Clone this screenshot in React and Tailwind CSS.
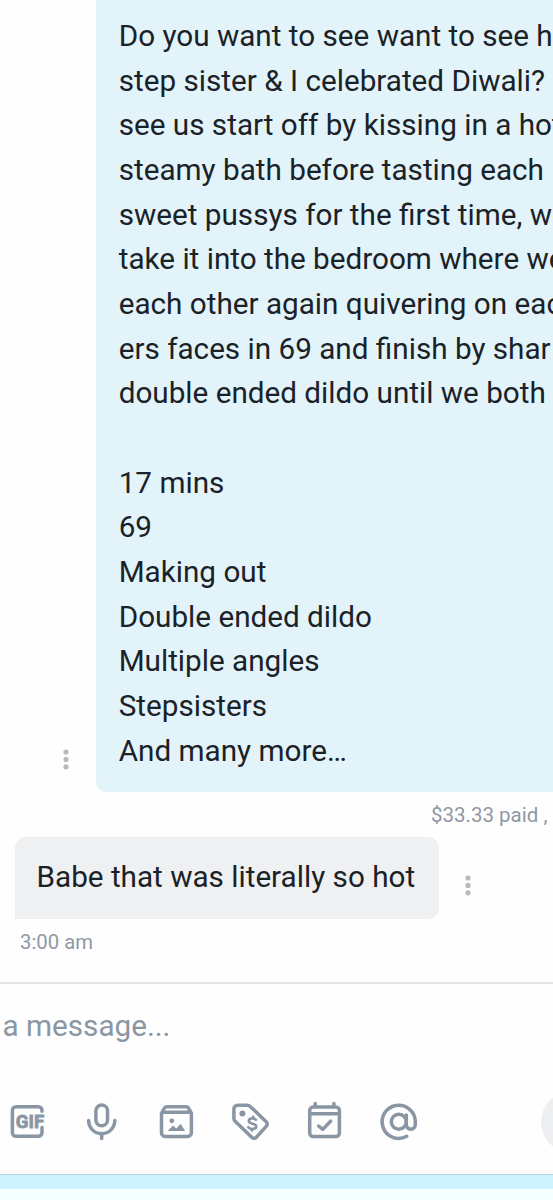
import { clsx } from 'clsx';

const messageLines = [
    'Do you want to see want to see h',
    'step sister & I celebrated Diwali?',
    'see us start off by kissing in a hot',
    'steamy bath before tasting each',
    'sweet pussys for the first time, w',
    'take it into the bedroom where we',
    'each other again quivering on eac',
    'ers faces in 69 and finish by shar',
    'double ended dildo until we both',
    '',
    '17 mins',
    '69',
    'Making out',
    'Double ended dildo',
    'Multiple angles',
    'Stepsisters',
    'And many more…',
];

function MoreButton({ className }) {
    return (
        <button type="button" aria-label="More" className={clsx('shrink-0', className)}>
            <svg width="6" height="21" viewBox="0 0 6 21" fill="#b6bac0">
                <circle cx="3" cy="3" r="2.6" />
                <circle cx="3" cy="10.4" r="2.6" />
                <circle cx="3" cy="17.8" r="2.6" />
            </svg>
        </button>
    );
}

function ToolIcon({ label, children }) {
    return (
        <button type="button" aria-label={label} className="shrink-0">
            <svg
                width="44"
                height="44"
                viewBox="0 0 44 44"
                fill="none"
                stroke="#8a96a3"
                strokeWidth="3.5"
                strokeLinecap="round"
                strokeLinejoin="round"
            >
                {children}
            </svg>
        </button>
    );
}

export default function App() {
    return (
        <div className="flex h-[1200px] w-[553px] flex-col overflow-hidden bg-[#fefefe] font-['Roboto',sans-serif] text-[29.68px] leading-[44.67px] text-[#1b2227]">
            <div className="flex h-[792px] shrink-0 items-end">
                <MoreButton className="mb-[22.500px] ml-[63.400px] mr-[27px]" />
                <div className="h-full w-[560px] shrink-0 rounded-bl-[10px] bg-[#e2f3fa] pl-[22.300px] pt-[14px]">
                    {messageLines.map((line, i) => (
                        <p key={i} className="h-[44.67px] whitespace-nowrap">{line}</p>
                    ))}
                </div>
            </div>

            <div className="flex h-[45px] shrink-0 pl-[431px] pt-[1px] text-[20.5px] text-[#8f98a3]">
                <span className="whitespace-nowrap">$33.33 paid ,</span>
            </div>

            <div className="flex h-[82px] shrink-0 items-end pl-[14.500px]">
                <div className="h-full w-[424px] rounded-[11px] rounded-bl-none bg-[#eff0f2] pl-[22px] pt-[18px]">
                    <p className="whitespace-nowrap">Babe that was literally so hot</p>
                </div>
                <MoreButton className="mb-[23px] ml-[26.500px]" />
            </div>
            <div className="h-[63px] shrink-0 pl-[20px] pt-[1px] text-[20.3px] text-[#8f98a3]">3:00 am</div>

            <div className="flex h-[192px] shrink-0 flex-col border-t-2 border-[#e2e4e5]">
                <p className="h-[116px] pl-[2.500px] pt-[20px] text-[#8a96a3]">a message...</p>
                <div className="flex items-start">
                    <div className="flex w-[541px] shrink-0 gap-[30.3px] pl-[6px]">
                        <ToolIcon label="GIF">
                            <path d="M36 11.300v-.9a3.700 3.700 0 0 0-3.700-3.700H10.100a3.700 3.700 0 0 0-3.700 3.700v22.200a3.700 3.700 0 0 0 3.700 3.700H32.300a3.700 3.700 0 0 0 3.700-3.700v-5.200" />
                            <text
                                x="9.800"
                                y="28.200"
                                textLength="28.400"
                                lengthAdjust="spacingAndGlyphs"
                                className="font-['Roboto',sans-serif] text-[19px] font-bold"
                                fill="#8a96a3"
                                stroke="#8a96a3"
                                strokeWidth="0.8"
                            >
                                GIF
                            </text>
                        </ToolIcon>
                        <ToolIcon label="Voice">
                            <rect x="15.900" y="5" width="11.600" height="20.800" rx="5.800" />
                            <path d="M8.600 20.600a13.100 13.100 0 0 0 26.200 0M21.700 33.600v5" />
                        </ToolIcon>
                        <ToolIcon label="Vault">
                            <path d="M6.500 13.200l2.400-4.500c.6-1.200 1.400-1.900 2.700-1.900h19.700c1.300 0 2.100.7 2.700 1.900l2.400 4.500v19.500a3.700 3.700 0 0 1-3.700 3.700H10.200a3.700 3.700 0 0 1-3.700-3.700zM7.500 12.200h27.900" />
                            <circle cx="16.800" cy="20.800" r="2.400" fill="#8a96a3" stroke="none" />
                            <path d="M12.800 31l5.100-5.400 3.400 3 4.300-4.900 4.500 7.300z" fill="#8a96a3" stroke="none" />
                        </ToolIcon>
                        <ToolIcon label="Price">
                            <path d="M4.900 8.900a3.700 3.700 0 0 1 3.700-3.700h9.600c1.200 0 2.200.4 3 1.200l16 15.300a3.200 3.200 0 0 1 0 4.700L27.500 37.200a3.400 3.400 0 0 1-4.800 0L6.100 21.300a3.700 3.700 0 0 1-1.200-2.700z" />
                            <circle cx="13.400" cy="13.600" r="3" fill="#8a96a3" stroke="none" />
                            <path d="M26.900 19.800c-.8-1-2-1.400-3.400-1.400-2.200 0-3.700.9-3.700 2.600 0 3.600 7.500 1.700 7.500 5.300 0 1.800-1.600 2.700-3.900 2.700-1.700 0-3.200-.6-4.100-1.800M24.200 16.800v1.500M22.900 29.100v1.500" strokeWidth="2.600" />
                        </ToolIcon>
                        <ToolIcon label="Schedule">
                            <rect x="6.700" y="6.900" width="29.700" height="29.500" rx="3.400" />
                            <path d="M6.700 13.700h29.700M12.200 3.600v3M30.900 3.600v3M15.600 26l4.200 3.400 7.800-8.200" />
                        </ToolIcon>
                        <ToolIcon label="Mention">
                            <circle cx="21.800" cy="21.700" r="7.500" />
                            <path d="M29.300 15v9.600a4.500 4.500 0 0 0 9 .2V21.700A16.600 16.600 0 1 0 29.800 36.300" />
                        </ToolIcon>
                    </div>
                    <button type="button" aria-label="Send" className="-mt-[9px] size-[62px] shrink-0 rounded-full bg-[#edeef0]" />
                </div>
            </div>

            <div className="h-[15px] shrink-0 border-t border-[#b5d3dc] bg-[#cdf4fd]" />
            <div className="grow bg-[#f5ffff]" />
        </div>
    );
}
